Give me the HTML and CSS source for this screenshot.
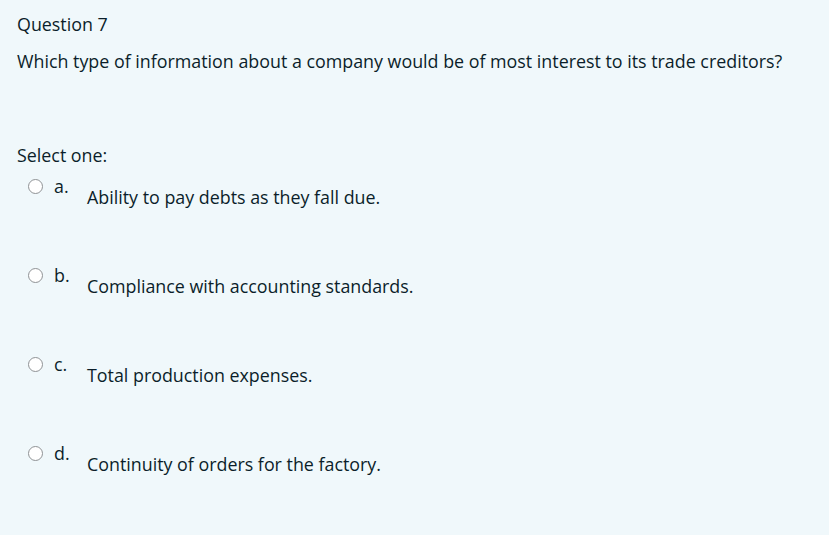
FILE: index.html
```html
<!DOCTYPE html>
<html>
<head>
<meta charset="utf-8">
<link rel="stylesheet" href="styles.css">
</head>
<body>
<div class="formulation">
  <div class="qno">Question 7</div>
  <div class="qtext">Which type of information about a company would be of most interest to its trade creditors?</div>
  <div class="prompt">Select one:</div>
  <div class="answers">
    <div class="opt"><span class="radio"></span><span class="letter">a.</span><span class="text">Ability to pay debts as they fall due.</span></div>
    <div class="opt"><span class="radio"></span><span class="letter">b.</span><span class="text">Compliance with accounting standards.</span></div>
    <div class="opt"><span class="radio"></span><span class="letter">c.</span><span class="text">Total production expenses.</span></div>
    <div class="opt"><span class="radio"></span><span class="letter">d.</span><span class="text">Continuity of orders for the factory.</span></div>
  </div>
</div>
</body>
</html>
```
FILE: styles.css
```css
html, body { margin: 0; padding: 0; }
body {
  background: #f0f8fb;
  color: #0b1e2a;
  font-family: "Open Sans", "Noto Sans", sans-serif;
  font-size: 17.85px;
  width: 829px;
  height: 535px;
  overflow: hidden;
}
.formulation { padding: 12px 17px; }
.qno { line-height: 24px; }
.qtext { margin-top: 13px; line-height: 24px; }
.prompt { margin-top: 70px; line-height: 24px; }
.answers { display: flex; flex-direction: column; margin-top: 8px; }
.opt { display: flex; align-items: flex-start; height: 89px; padding-left: 11px; }
.radio {
  width: 15px; height: 15px; border: 1.5px solid #8f9295; border-radius: 50%;
  background: #fff; margin-top: 4px; box-sizing: border-box; flex: none;
}
.letter { margin-left: 11px; width: 33px; line-height: 22px; }
.text { margin-top: 10px; line-height: 24px; }
```
